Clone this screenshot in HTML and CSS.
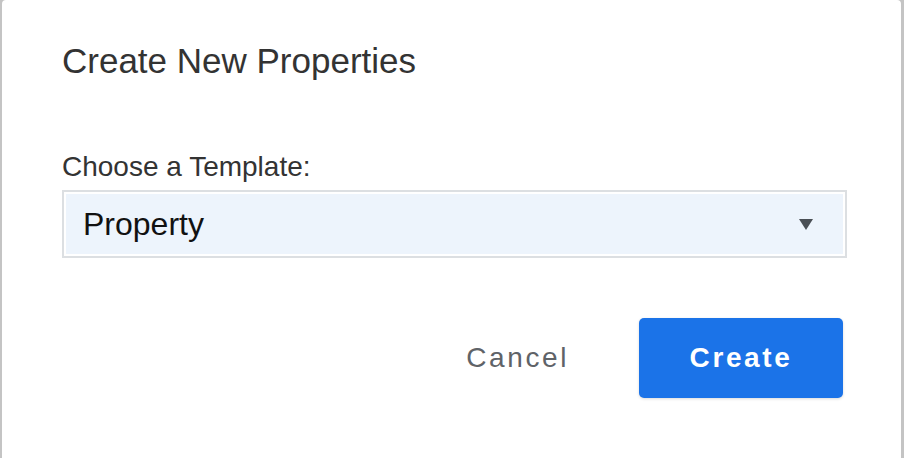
FILE: index.html
```html
<!DOCTYPE html>
<html lang="en">
<head>
    <meta charset="UTF-8">
    <meta name="viewport" content="width=device-width, initial-scale=1.0">
    <title>Create New Properties</title>
    <link rel="stylesheet" href="styles.css">
</head>
<body>

    <div class="dialog">
        <h1 class="dialog-title">Create New Properties</h1>
        <form id="createForm">
            <label class="field-label" for="template">Choose a Template:</label>
            <div class="select-box" id="template">
                <span class="select-value">Property</span>
                <svg class="select-arrow" width="14" height="11" viewBox="0 0 14 11">
                    <polygon points="0,0 14,0 7,11" fill="#4a4f55"/>
                </svg>
            </div>
            <div class="actions">
                <button type="button" class="btn-cancel">Cancel</button>
                <button type="submit" class="btn-create">Create</button>
            </div>
        </form>
    </div>

</body>
</html>
```

FILE: styles.css
```css
body {
    margin: 0;
    background-color: #c4c4c4;
    font-family: "Liberation Sans", Arial, sans-serif;
}
.dialog {
    height: 458px;
    box-sizing: border-box;
    margin: 0 3px 0 2px;
    padding: 41px 54px 0 60px;
    background-color: #fff;
    border-radius: 4px 4px 0 0;
}
.dialog-title {
    margin: 0 0 70px 0;
    font-size: 35px;
    line-height: 40px;
    font-weight: normal;
    color: #333;
}
.field-label {
    display: block;
    font-size: 28px;
    line-height: 32px;
    color: #333;
    margin-bottom: 7px;
}
.select-box {
    display: flex;
    align-items: center;
    justify-content: space-between;
    height: 68px;
    box-sizing: border-box;
    padding: 0 32px 0 19px;
    border: 2px solid #dcdfe2;
    background-color: #edf4fc;
    box-shadow: inset 0 0 0 2px #fff;
}
.select-value {
    font-size: 32px;
    color: #111;
}
.actions {
    display: flex;
    justify-content: flex-end;
    align-items: center;
    gap: 50px;
    margin-top: 60px;
    padding-right: 4px;
}
.actions button {
    height: 80px;
    border: none;
    font-family: inherit;
    font-size: 28px;
    letter-spacing: 2.6px;
    cursor: pointer;
}
.btn-cancel {
    padding: 0 20px;
    background: none;
    color: #5f6368;
}
.btn-create {
    width: 204px;
    background-color: #1b73e8;
    color: #fff;
    font-weight: bold;
    border-radius: 5px;
    box-shadow: 0 1px 3px rgba(0, 0, 0, 0.15);
}
```
